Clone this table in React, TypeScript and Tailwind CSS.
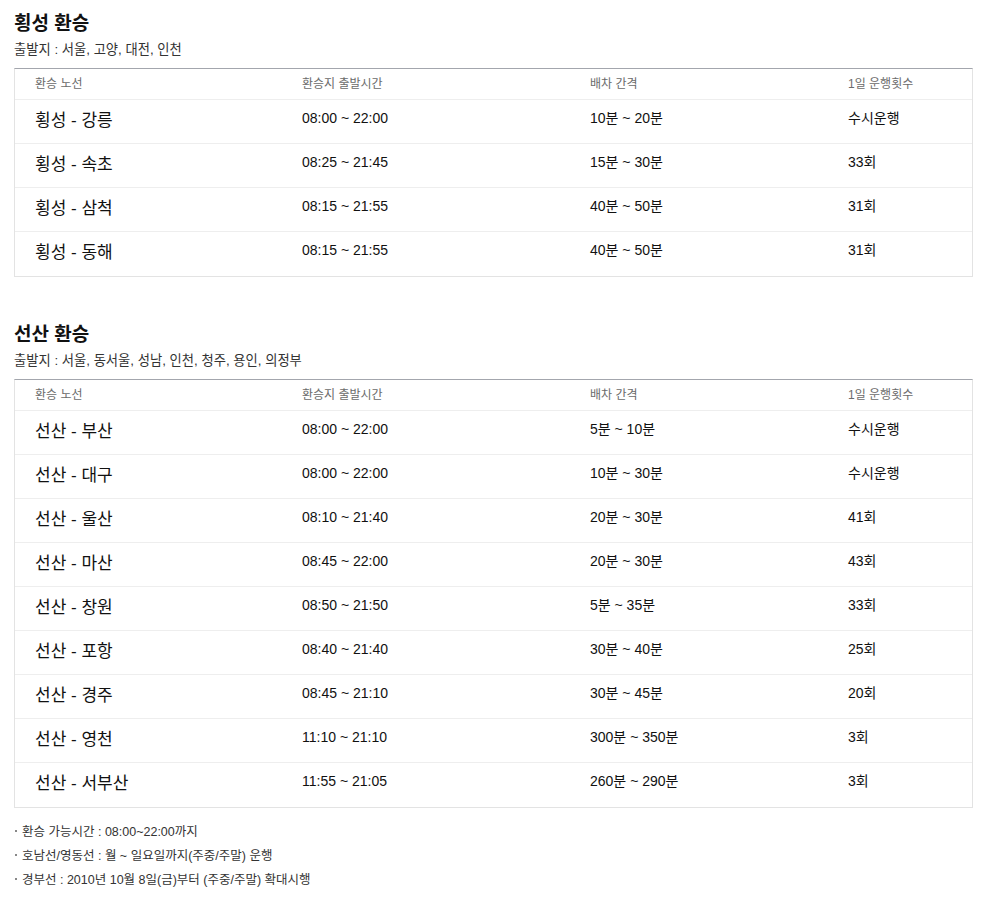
import React from "react";

type Route = { name: string; time: string; interval: string; count: string };

const hoengseong: Route[] = [
  { name: "횡성 - 강릉", time: "08:00 ~ 22:00", interval: "10분 ~ 20분", count: "수시운행" },
  { name: "횡성 - 속초", time: "08:25 ~ 21:45", interval: "15분 ~ 30분", count: "33회" },
  { name: "횡성 - 삼척", time: "08:15 ~ 21:55", interval: "40분 ~ 50분", count: "31회" },
  { name: "횡성 - 동해", time: "08:15 ~ 21:55", interval: "40분 ~ 50분", count: "31회" },
];

const seonsan: Route[] = [
  { name: "선산 - 부산", time: "08:00 ~ 22:00", interval: "5분 ~ 10분", count: "수시운행" },
  { name: "선산 - 대구", time: "08:00 ~ 22:00", interval: "10분 ~ 30분", count: "수시운행" },
  { name: "선산 - 울산", time: "08:10 ~ 21:40", interval: "20분 ~ 30분", count: "41회" },
  { name: "선산 - 마산", time: "08:45 ~ 22:00", interval: "20분 ~ 30분", count: "43회" },
  { name: "선산 - 창원", time: "08:50 ~ 21:50", interval: "5분 ~ 35분", count: "33회" },
  { name: "선산 - 포항", time: "08:40 ~ 21:40", interval: "30분 ~ 40분", count: "25회" },
  { name: "선산 - 경주", time: "08:45 ~ 21:10", interval: "30분 ~ 45분", count: "20회" },
  { name: "선산 - 영천", time: "11:10 ~ 21:10", interval: "300분 ~ 350분", count: "3회" },
  { name: "선산 - 서부산", time: "11:55 ~ 21:05", interval: "260분 ~ 290분", count: "3회" },
];

const notes = [
  "환승 가능시간 : 08:00~22:00까지",
  "호남선/영동선 : 월 ~ 일요일까지(주중/주말) 운행",
  "경부선 : 2010년 10월 8일(금)부터 (주중/주말) 확대시행",
];

const cols = "grid grid-cols-[267px_288px_258px_1fr]";

function TransferTable({ rows }: { rows: Route[] }) {
  return (
    <div className="border border-[#e3e3e3] border-t-[#a3a6ad]">
      <div className={`${cols} h-[31px] items-center text-[12px] text-[#6b6b6b] border-b border-[#eeeeee]`}>
        <div className="pl-5">환승 노선</div>
        <div className="pl-5">환승지 출발시간</div>
        <div className="pl-5">배차 간격</div>
        <div className="pl-5">1일 운행횟수</div>
      </div>
      {rows.map((r, i) => (
        <div
          key={r.name}
          className={`${cols} h-[44px] items-start text-[14px] text-[#111] ${
            i < rows.length - 1 ? "border-b border-[#eeeeee]" : ""
          }`}
        >
          <div className="pl-5 pt-[10px] text-[17px] leading-[22px]">{r.name}</div>
          <div className="pl-5 pt-[9px] leading-[18px]">{r.time}</div>
          <div className="pl-5 pt-[9px] leading-[18px]">{r.interval}</div>
          <div className="pl-5 pt-[9px] leading-[18px]">{r.count}</div>
        </div>
      ))}
    </div>
  );
}

function Section({ title, from, rows }: { title: string; from: string; rows: Route[] }) {
  return (
    <section>
      <h2 className="text-[19px] font-bold leading-[24px] text-[#111]">{title}</h2>
      <p className="mt-[5px] mb-[9px] text-[13.3px] leading-[18px] text-[#333]">{from}</p>
      <TransferTable rows={rows} />
    </section>
  );
}

export default function App() {
  return (
    <div
      className="min-h-screen bg-white pl-[14px] pr-[10px] pt-[12px] pb-4 w-[983px]"
      style={{ fontFamily: '"Liberation Sans", "Noto Sans CJK KR", sans-serif' }}
    >
      <Section title="횡성 환승" from="출발지 : 서울, 고양, 대전, 인천" rows={hoengseong} />
      <div className="h-[46px]" />
      <Section
        title="선산 환승"
        from="출발지 : 서울, 동서울, 성남, 인천, 청주, 용인, 의정부"
        rows={seonsan}
      />
      <ul className="mt-[12px] text-[12.5px] leading-[24px] text-[#333]">
        {notes.map((n) => (
          <li key={n} className="flex items-center">
            <span className="mr-[5px] ml-[1px] mb-[3px] inline-block h-[2px] w-[2px] bg-[#888]" />
            {n}
          </li>
        ))}
      </ul>
    </div>
  );
}
